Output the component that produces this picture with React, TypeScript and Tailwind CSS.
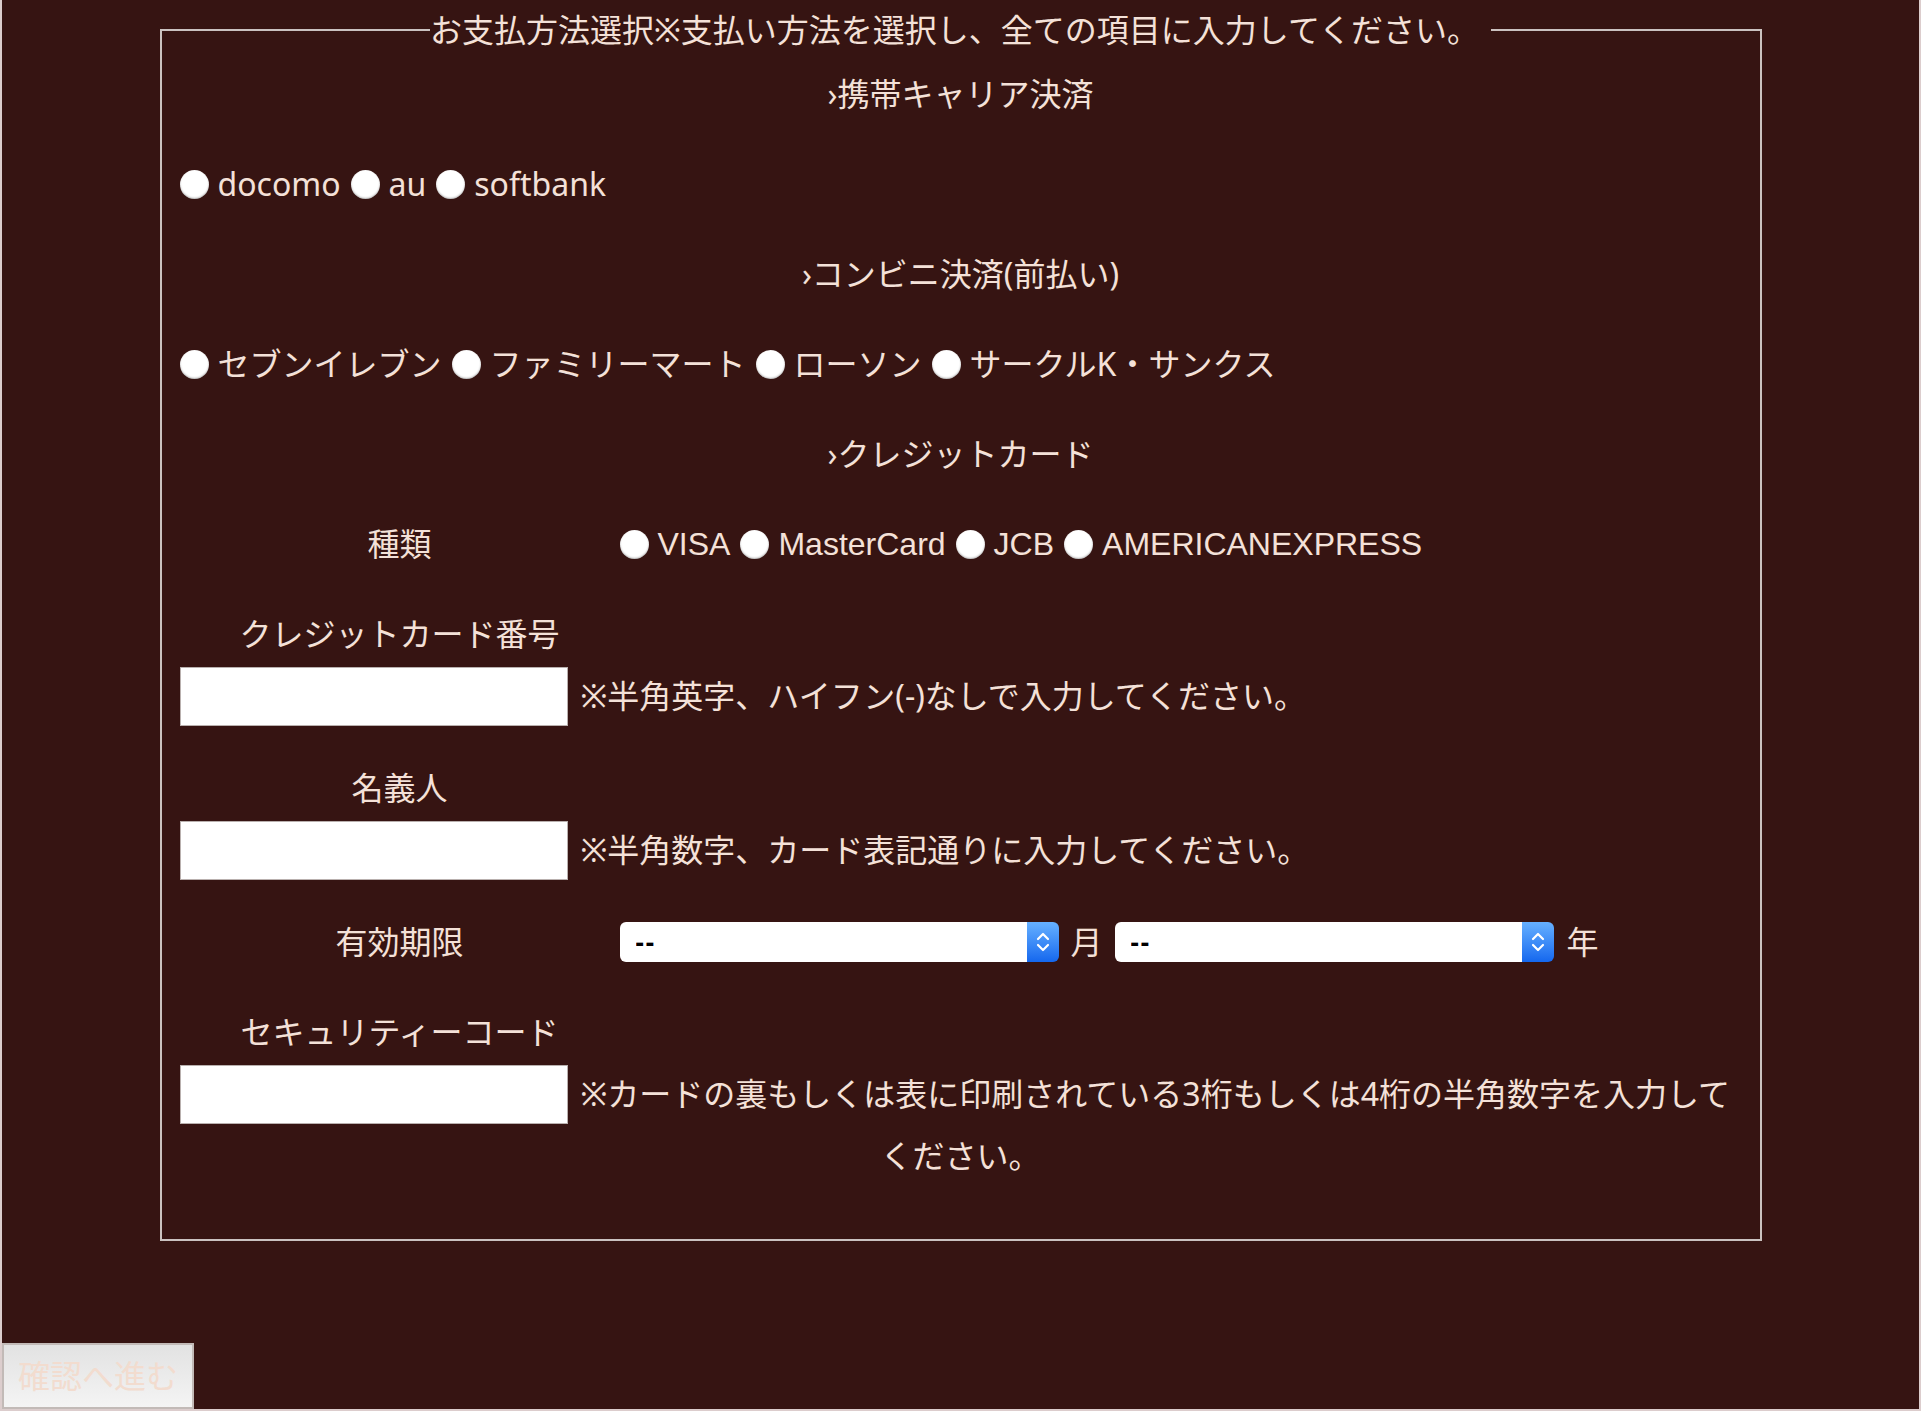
import React from 'react';

const Radio = ({ name }: { name: string }) => (
  <input
    type="radio"
    name={name}
    className="appearance-none shrink-0 w-[29px] h-[29px] rounded-full bg-white shadow-[inset_0_-1px_2px_rgba(0,0,0,0.3)]"
  />
);

const Option = ({ name, label, latin }: { name: string; label: string; latin?: boolean }) => (
  <label className="flex items-center">
    <Radio name={name} />
    <span className={latin ? "ml-[9px] mr-[10px] font-['Liberation_Sans',sans-serif]" : 'ml-[9px] mr-[10px]'}>{label}</span>
  </label>
);

const Select = () => (
  <div className="flex h-[40px] w-[439px] shrink-0">
    <select className="appearance-none flex-1 bg-white rounded-l-[6px] pl-[16px] text-[26px] font-bold tracking-[2px] text-black outline-none">
      <option>--</option>
    </select>
    <span className="w-[32px] rounded-r-[6px] bg-linear-to-b from-[#66b0ff] to-[#1467ee] flex items-center justify-center">
      <svg width="14" height="26" viewBox="0 0 14 26" fill="none" stroke="white" strokeWidth="2.2" strokeLinecap="round" strokeLinejoin="round">
        <path d="M2 10 L7 5 L12 10" />
        <path d="M2 16 L7 21 L12 16" />
      </svg>
    </span>
  </div>
);

const TextInput = () => (
  <input type="text" className="w-[388px] h-[59px] shrink-0 bg-white border border-[#b9b0ae] outline-none" />
);

const carriers = ['docomo', 'au', 'softbank'];
const stores = ['セブンイレブン', 'ファミリーマート', 'ローソン', 'サークルK・サンクス'];
const cards = ['VISA', 'MasterCard', 'JCB', 'AMERICANEXPRESS'];

export default function App() {
  return (
    <div className="min-h-[1411px] flex flex-col bg-[#361412] border-x-2 border-b-2 border-[#dccdcd] text-[32px] text-[#f4e1d8] font-['Noto_Sans','Noto_Sans_CJK_JP',sans-serif]">
      {/* 支払い方法 */}
      <fieldset className="mx-auto w-[1602px] border-2 border-[#cbc2c0] px-[18px] pt-[4px] pb-[53px]">
        <legend className="mx-auto pr-[12px] leading-[60px]">
          お支払方法選択※支払い方法を選択し、全ての項目に入力してください。
        </legend>

        <div className="flex flex-col gap-[30px]">
          <div className="text-center leading-[60px]">›携帯キャリア決済</div>
          <div className="flex items-center h-[60px]">
            {carriers.map((c) => (
              <Option key={c} name="carrier" label={c} />
            ))}
          </div>

          <div className="text-center leading-[60px]">›コンビニ決済(前払い)</div>
          <div className="flex items-center h-[60px]">
            {stores.map((s) => (
              <Option key={s} name="store" label={s} />
            ))}
          </div>

          <div className="text-center leading-[60px]">›クレジットカード</div>
          <div className="flex items-center h-[60px]">
            <span className="w-[440px] text-center">種類</span>
            {cards.map((c) => (
              <Option key={c} name="card" label={c} latin />
            ))}
          </div>

          <div>
            <div className="w-[440px] text-center leading-[60px]">クレジットカード番号</div>
            <div className="flex items-center h-[64px]">
              <TextInput />
              <span className="ml-[13px]">※半角英字、ハイフン(-)なしで入力してください。</span>
            </div>
          </div>

          <div>
            <div className="w-[440px] text-center leading-[60px]">名義人</div>
            <div className="flex items-center h-[64px]">
              <TextInput />
              <span className="ml-[13px]">※半角数字、カード表記通りに入力してください。</span>
            </div>
          </div>

          <div className="flex items-center h-[60px]">
            <span className="w-[440px] text-center">有効期限</span>
            <Select />
            <span className="mx-[12px]">月</span>
            <Select />
            <span className="ml-[13px]">年</span>
          </div>

          <div>
            <div className="w-[440px] text-center leading-[60px]">セキュリティーコード</div>
            <div className="flex items-center h-[64px]">
              <TextInput />
              <span className="ml-[13px]">※カードの裏もしくは表に印刷されている3桁もしくは4桁の半角数字を入力して</span>
            </div>
            <div className="text-center leading-[60px]">ください。</div>
          </div>
        </div>
      </fieldset>

      <button className="mt-auto self-start w-[192px] h-[66px] border-2 border-[#c2bab7] bg-linear-to-b from-[#e2e2e2] to-[#f4f4f4] text-[#f2dccf]">
        確認へ進む
      </button>
    </div>
  );
}
